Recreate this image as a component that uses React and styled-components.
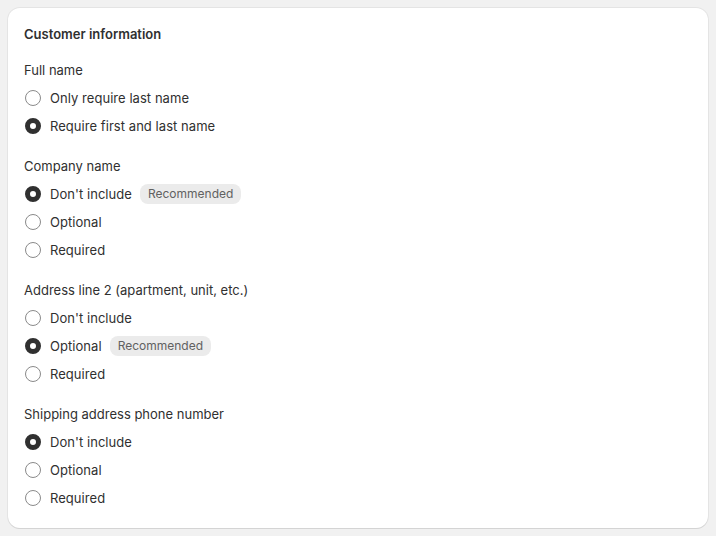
import styled, { createGlobalStyle } from "styled-components";

const GlobalStyle = createGlobalStyle`
  html, body {
    margin: 0;
    padding: 0;
    background: #f1f1f1;
  }
  body {
    font-family: Inter, "Liberation Sans", sans-serif;
    color: #303030;
    -webkit-font-smoothing: antialiased;
  }
`;

const sections = [
  {
    label: "Full name",
    options: ["Only require last name", "Require first and last name"],
    selected: 1,
  },
  {
    label: "Company name",
    options: ["Don't include", "Optional", "Required"],
    selected: 0,
    recommended: 0,
  },
  {
    label: "Address line 2 (apartment, unit, etc.)",
    options: ["Don't include", "Optional", "Required"],
    selected: 1,
    recommended: 1,
  },
  {
    label: "Shipping address phone number",
    options: ["Don't include", "Optional", "Required"],
    selected: 0,
  },
];

const App = () => {
  return (
    <Page>
      <GlobalStyle />
      <Card>
        <Title>Customer information</Title>
        {sections.map((s) => (
          <Section key={s.label}>
            <Label>{s.label}</Label>
            <Options>
              {s.options.map((o, i) => (
                <Option key={o}>
                  <Radio $checked={i === s.selected} />
                  <OptionText>{o}</OptionText>
                  {i === s.recommended && <Badge>Recommended</Badge>}
                </Option>
              ))}
            </Options>
          </Section>
        ))}
      </Card>
    </Page>
  );
};

const Page = styled.div`
  padding: 8px;
  width: 700px;
`;

const Card = styled.div`
  background: #ffffff;
  border-radius: 12px;
  box-shadow: 0 1px 0 0 #d4d4d4, 0 0 0 1px rgba(0, 0, 0, 0.05);
  padding: 16px;
  display: flex;
  flex-direction: column;
  gap: 16px;
`;

const Title = styled.h2`
  margin: 0;
  font-size: 13px;
  line-height: 20px;
  font-weight: 600;
  color: #303030;
`;

const Section = styled.div`
  display: flex;
  flex-direction: column;
  gap: 4px;
`;

const Label = styled.div`
  font-size: 13px;
  line-height: 20px;
  color: #303030;
`;

const Options = styled.div`
  display: flex;
  flex-direction: column;
`;

const Option = styled.label`
  display: flex;
  align-items: center;
  height: 28px;
  padding-left: 1px;
  cursor: pointer;
`;

const Radio = styled.span`
  box-sizing: border-box;
  width: 16px;
  height: 16px;
  margin-right: 9px;
  border-radius: 50%;
  background: #ffffff;
  border: ${(p) => (p.$checked ? "5px solid #303030" : "1px solid #8a8a8a")};
  flex-shrink: 0;
`;

const OptionText = styled.span`
  font-size: 13px;
  line-height: 20px;
  letter-spacing: 0.05px;
  color: #303030;
`;

const Badge = styled.span`
  margin-left: 8px;
  font-size: 12px;
  line-height: 20px;
  padding: 0 8px;
  border-radius: 8px;
  background: #ebebeb;
  color: #616161;
`;

export default App;
